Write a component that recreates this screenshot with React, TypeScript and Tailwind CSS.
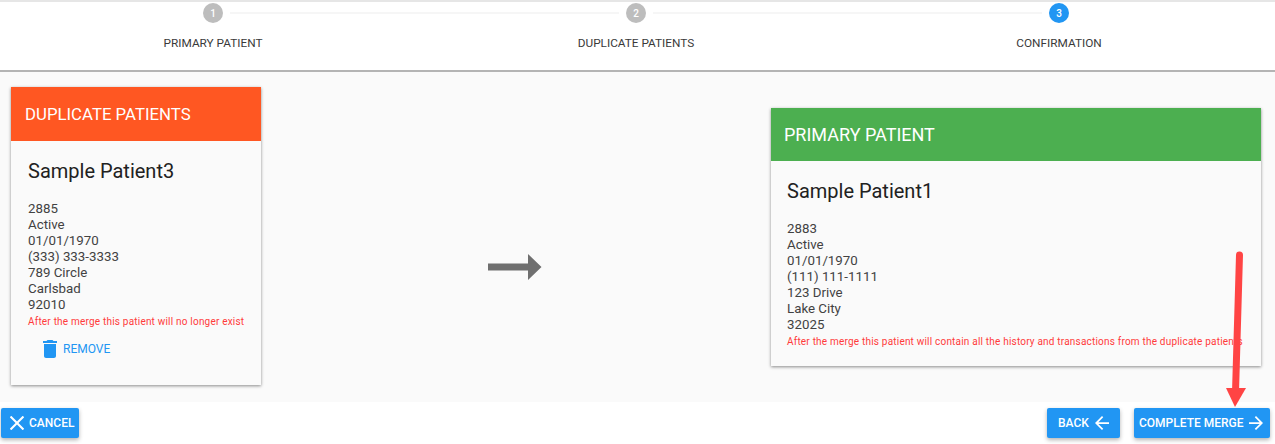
import React from "react";

const font = { fontFamily: "Roboto, sans-serif" };

function Step({ n, label, active, lineLeft, lineRight }: { n: number; label: string; active?: boolean; lineLeft?: boolean; lineRight?: boolean }) {
  return (
    <div className="flex flex-col items-center w-[423px]">
      <div className="flex items-center w-full h-5 mt-px">
        <div className={`flex-1 h-[2px] mr-[7px] ${lineLeft ? "bg-[#f6f6f6]" : ""}`} />
        <div className={`w-5 h-5 rounded-full flex items-center justify-center text-[10px] font-medium text-white ${active ? "bg-[#2196f3]" : "bg-[#bdbdbd]"}`}>{n}</div>
        <div className={`flex-1 h-[2px] ml-[7px] ${lineRight ? "bg-[#f6f6f6]" : ""}`} />
      </div>
      <div className="mt-[12px] text-[11.8px] leading-[16px] text-[#3a3a3a]">{label}</div>
    </div>
  );
}

function Card({ title, header, body, noteGap, width, name, lines, note, children }: { title: string; header: string; body: string; noteGap: string; width: string; name: string; lines: string[]; note: string; children?: React.ReactNode }) {
  return (
    <div className={`${width} shrink-0 bg-[#fafafa] shadow-[0_1px_3px_rgba(0,0,0,0.45)]`}>
      <div className={`${header} flex items-center text-white`}>{title}</div>
      <div className={`${body} pt-[18px] pb-[17px]`}>
        <div className="text-[20px] leading-[24px] text-[#212121]">{name}</div>
        <div className="mt-[18px] text-[13.3px] leading-[16px] text-[#424242]">
          {lines.map((l) => (
            <div key={l}>{l}</div>
          ))}
        </div>
        <div className={`${noteGap} text-[10px] leading-[14px] tracking-[0.2px] text-[#ff3b3b] whitespace-nowrap`}>{note}</div>
        {children}
      </div>
    </div>
  );
}

function ActionButton({ children, className }: { children: React.ReactNode; className: string }) {
  return (
    <div className={`h-[30px] flex items-center rounded-[2px] bg-[#2196f3] text-white text-[12px] font-medium shadow-[0_2px_4px_rgba(0,0,0,0.3)] ${className}`}>{children}</div>
  );
}

export default function App() {
  return (
    <div style={font} className="relative w-[1275px] h-[444px] overflow-hidden bg-white flex flex-col">
      <div className="h-[2px] bg-[#e6e6e6]" />
      <div className="h-[70px] flex items-start pl-[1.500px] border-b-2 border-[#b4b4b4]">
        <Step n={1} label="PRIMARY PATIENT" lineRight />
        <Step n={2} label="DUPLICATE PATIENTS" lineLeft lineRight />
        <Step n={3} label="CONFIRMATION" active lineLeft />
      </div>
      <div className="h-[330px] bg-[#fafafa] flex items-start pl-[11px] pt-[15px]">
        <Card
          title="DUPLICATE PATIENTS"
          header="bg-[#ff5722] h-[54px] text-[16.8px] pl-[14px] pt-[1px]"
          body="pl-[17px]"
          noteGap="mt-[2px]"
          width="w-[250px]"
          name="Sample Patient3"
          lines={["2885", "Active", "01/01/1970", "(333) 333-3333", "789 Circle", "Carlsbad", "92010"]}
          note="After the merge this patient will no longer exist"
        >
          <div className="mt-[11px] ml-[14px] pb-[10px] flex items-center text-[12px] text-[#2196f3]">
            <svg width="16" height="18" viewBox="5 3 14 18" fill="#2196f3" className="mr-[5px]">
              <path d="M6 19c0 1.100.9 2 2 2h8c1.100 0 2-.9 2-2V7H6v12zM19 4h-3.500l-1-1h-5l-1 1H5v2h14V4z" />
            </svg>
            REMOVE
          </div>
        </Card>
        <svg width="54" height="26" viewBox="0 0 54 26" className="shrink-0 mt-[166.500px] ml-[226.500px] mr-[229.500px]">
          <path d="M0 9.500H40V0L53.500 13 40 26V16.500H0z" fill="#6f6f6f" />
        </svg>
        <div className="mt-[21px]">
          <Card
            title="PRIMARY PATIENT"
            header="bg-[#4caf50] h-[53px] text-[18px] pl-[13px]"
            body="pl-[16px]"
            noteGap="mt-[1.500px]"
            width="w-[490px]"
            name="Sample Patient1"
            lines={["2883", "Active", "01/01/1970", "(111) 111-1111", "123 Drive", "Lake City", "32025"]}
            note="After the merge this patient will contain all the history and transactions from the duplicate patients"
          />
        </div>
      </div>
      <div className="flex-1 flex items-start pt-[6px] pl-px pr-[5px]">
        <ActionButton className="w-[78px] pl-[8px]">
          <svg width="16" height="16" viewBox="5 5 14 14" fill="white" className="mr-[4px] scale-90">
            <path d="M19 6.410 17.590 5 12 10.590 6.410 5 5 6.410 10.590 12 5 17.590 6.410 19 12 13.410 17.590 19 19 17.590 13.410 12z" />
          </svg>
          CANCEL
        </ActionButton>
        <div className="flex-1" />
        <ActionButton className="w-[73px] pl-[11px]">
          BACK
          <svg width="16" height="14" viewBox="4 4 16 16" fill="white" className="ml-[5px]">
            <path d="M20 11H7.830l5.590-5.590L12 4l-8 8 8 8 1.410-1.410L7.830 13H20v-2z" />
          </svg>
        </ActionButton>
        <ActionButton className="w-[136px] ml-[14px] pl-[5px]">
          COMPLETE MERGE
          <svg width="16" height="14" viewBox="4 4 16 16" fill="white" className="ml-[5px]">
            <path d="M12 4l-1.410 1.410L16.170 11H4v2h12.170l-5.580 5.590L12 20l8-8z" />
          </svg>
        </ActionButton>
      </div>
      <svg width="40" height="165" viewBox="1220 250 40 165" className="absolute left-[1220px] top-[250px]">
        <path d="M1239.500 255 L1235.500 392" stroke="#ff4444" strokeWidth="7" strokeLinecap="round" fill="none" />
        <path d="M1226 388 H1246 L1235 407z" fill="#ff4444" />
      </svg>
    </div>
  );
}
